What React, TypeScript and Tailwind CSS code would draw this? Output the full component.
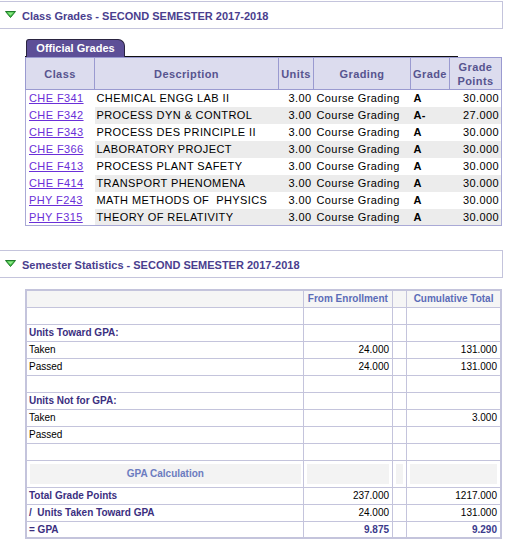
import React from "react";

const courses = [
  { code: "CHE F341", desc: "CHEMICAL ENGG LAB II", grade: "A", pts: "30.000" },
  { code: "CHE F342", desc: "PROCESS DYN & CONTROL", grade: "A-", pts: "27.000" },
  { code: "CHE F343", desc: "PROCESS DES PRINCIPLE II", grade: "A", pts: "30.000" },
  { code: "CHE F366", desc: "LABORATORY PROJECT", grade: "A", pts: "30.000" },
  { code: "CHE F413", desc: "PROCESS PLANT SAFETY", grade: "A", pts: "30.000" },
  { code: "CHE F414", desc: "TRANSPORT PHENOMENA", grade: "A", pts: "30.000" },
  { code: "PHY F243", desc: "MATH METHODS OF  PHYSICS", grade: "A", pts: "30.000" },
  { code: "PHY F315", desc: "THEORY OF RELATIVITY", grade: "A", pts: "30.000" },
];

function Triangle() {
  return (
    <svg width="11" height="7" viewBox="0 0 11 7" className="shrink-0 mb-[2px]">
      <polygon points="0.5,0.5 10.5,0.5 5.5,6.5" fill="#3fbf3f" stroke="#1f7a2a" strokeWidth="1" />
      <polygon points="2.5,1.5 8.5,1.5 5.5,4.5" fill="#8fe88a" />
    </svg>
  );
}

function SectionHeader({ title }: { title: string }) {
  return (
    <div className="w-[503px] h-[28px] border-t border-b border-r border-[#c4c4dc] flex items-center pl-[5px] gap-[6px]">
      <Triangle />
      <span className="text-[11px] font-bold text-[#4a3e8e] pt-[3px]">{title}</span>
    </div>
  );
}

type StatRow =
  | { kind: "blank" }
  | { kind: "label"; text: string }
  | { kind: "value"; text: string; fe?: string; ct?: string };

const stats: StatRow[] = [
  { kind: "blank" },
  { kind: "label", text: "Units Toward GPA:" },
  { kind: "value", text: "Taken", fe: "24.000", ct: "131.000" },
  { kind: "value", text: "Passed", fe: "24.000", ct: "131.000" },
  { kind: "blank" },
  { kind: "label", text: "Units Not for GPA:" },
  { kind: "value", text: "Taken", ct: "3.000" },
  { kind: "value", text: "Passed" },
  { kind: "blank" },
];

const totals = [
  { text: "Total Grade Points", fe: "237.000", ct: "1217.000" },
  { text: "/  Units Taken Toward GPA", fe: "24.000", ct: "131.000" },
  { text: "= GPA", fe: "9.875", ct: "9.290", accent: true },
];

export default function App() {
  const cell = "border border-[#c4c4dc] h-[17px] p-0";
  return (
    <div className="w-[507px] h-[545px] bg-white pt-[1px] font-['Liberation_Sans',Arial,sans-serif] text-black overflow-hidden">
      <SectionHeader title="Class Grades - SECOND SEMESTER 2017-2018" />

      <div className="ml-[25px] mt-[10px]">
        <div className="w-[433px] h-[18px] border-b border-[#111] flex">
          <div className="ml-[1px] w-[99px] h-[18px] bg-[#5d4f97] border border-b-0 border-[#2a2440] rounded-tr-[7px] rounded-tl-[3px] flex items-center justify-center">
            <span className="text-[11px] font-bold text-white">Official Grades</span>
          </div>
        </div>

        <table className="border-collapse border border-[#a9a9d6] w-[476px] table-fixed text-[11px] tracking-[0.4px]">
          <colgroup>
            <col className="w-[69px]" />
            <col className="w-[184px]" />
            <col className="w-[35px]" />
            <col className="w-[97px]" />
            <col className="w-[39px]" />
            <col className="w-[52px]" />
          </colgroup>
          <thead>
            <tr className="h-[32px] bg-[#dcdcee] text-[#57548f] font-bold leading-[14px]">
              <th className="border border-[#9a9ad0] font-bold">Class</th>
              <th className="border border-[#9a9ad0] font-bold">Description</th>
              <th className="border border-[#9a9ad0] font-bold">Units</th>
              <th className="border border-[#9a9ad0] font-bold">Grading</th>
              <th className="border border-[#9a9ad0] font-bold">Grade</th>
              <th className="border border-[#9a9ad0] font-bold">Grade<br />Points</th>
            </tr>
          </thead>
          <tbody>
            {courses.map((c, i) => (
              <tr key={c.code} className={`h-[17px] ${i % 2 === 1 ? "bg-[#ececec]" : "bg-white"}`}>
                <td className="bg-white pl-[3px] p-0">
                  <a href="#" className="text-[#6a2fd8] underline">{c.code}</a>
                </td>
                <td className="pl-[2px] whitespace-pre">{c.desc}</td>
                <td className="text-right pr-[2px]">3.00</td>
                <td className="pl-[3px]">Course Grading</td>
                <td className="pl-[3px] font-bold">{c.grade}</td>
                <td className="text-right pr-[2px]">{c.pts}</td>
              </tr>
            ))}
          </tbody>
        </table>
      </div>

      <div className="mt-[24px]">
        <SectionHeader title="Semester Statistics - SECOND SEMESTER 2017-2018" />
      </div>

      <div className="ml-[25px] mt-[11px]">
        <table className="border-collapse border-2 border-[#c4c4dc] w-[477px] table-fixed text-[10px]">
          <colgroup>
            <col className="w-[276px]" />
            <col className="w-[89px]" />
            <col className="w-[14px]" />
            <col className="w-[94px]" />
          </colgroup>
          <tbody>
            <tr className="bg-[#f5f5f5] text-[#5b6cb8] font-bold">
              <td className={cell}></td>
              <td className={`${cell} text-center`}>From Enrollment</td>
              <td className={cell}></td>
              <td className={`${cell} text-center`}>Cumulative Total</td>
            </tr>
            {stats.map((r, i) => (
              <tr key={i}>
                <td className={`${cell} pl-[2px] ${r.kind === "label" ? "font-bold text-[#3b2f7f]" : ""}`}>
                  {r.kind === "blank" ? "" : r.text}
                </td>
                <td className={`${cell} text-right pr-[3px]`}>{r.kind === "value" ? r.fe : ""}</td>
                <td className={cell}></td>
                <td className={`${cell} text-right pr-[3px]`}>{r.kind === "value" ? r.ct : ""}</td>
              </tr>
            ))}
            <tr>
              <td className="border border-[#c4c4dc] p-[3px] pr-[2px]">
                <div className="h-[20px] bg-[#f3f3f3] flex items-center justify-center font-bold text-[#6c7cc0]">GPA Calculation</div>
              </td>
              <td className="border border-[#c4c4dc] p-[3px]">
                <div className="h-[20px] bg-[#f3f3f3]" />
              </td>
              <td className="border border-[#c4c4dc] p-[3px]">
                <div className="h-[20px] bg-[#f3f3f3]" />
              </td>
              <td className="border border-[#c4c4dc] p-[3px]">
                <div className="h-[20px] bg-[#f3f3f3]" />
              </td>
            </tr>
            {totals.map((t) => (
              <tr key={t.text} className={t.accent ? "text-[#3b3a8c] font-bold" : ""}>
                <td className={`${cell} pl-[2px] font-bold text-[#3b2f7f] whitespace-pre`}>{t.text}</td>
                <td className={`${cell} text-right pr-[3px]`}>{t.fe}</td>
                <td className={cell}></td>
                <td className={`${cell} text-right pr-[3px]`}>{t.ct}</td>
              </tr>
            ))}
          </tbody>
        </table>
      </div>
    </div>
  );
}
